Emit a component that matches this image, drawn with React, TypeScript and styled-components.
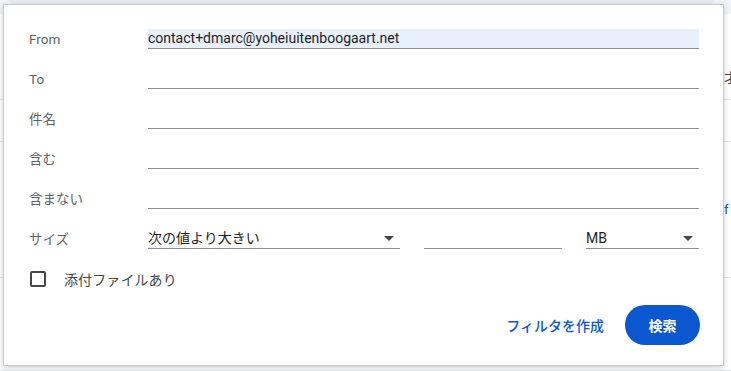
import React from "react";
import styled, { createGlobalStyle } from "styled-components";

const Global = createGlobalStyle`
  html, body { margin: 0; padding: 0; background: #ffffff; }
  body {
    font-family: Roboto, "Noto Sans CJK JP", "Noto Sans", sans-serif;
    -webkit-font-smoothing: antialiased;
  }
  * { box-sizing: border-box; }
`;

const Page = styled.div`
  position: relative;
  width: 731px;
  height: 371px;
  overflow: hidden;
  background: #ffffff;
`;

const TopStrip = styled.div`
  height: 14px;
  background: #f1f4f9;
  display: flex;
  padding: 0 16px 0 8px;
`;

const SearchBar = styled.div`
  flex: 1;
  height: 6px;
  margin-top: -2px;
  border-radius: 0 0 16px 16px;
  background: #e6ebf3;
`;

const ListRow = styled.div<{ $h: number; $color?: string; $top?: number }>`
  height: ${(p) => p.$h}px;
  border-bottom: 1px solid #e3e5e8;
  display: flex;
  align-items: ${(p) => (p.$top ? "flex-start" : "center")};
  padding-top: ${(p) => p.$top || 0}px;
  padding-left: 724px;
  font-size: 13px;
  line-height: 16px;
  color: ${(p) => p.$color || "#444746"};
  white-space: nowrap;
`;

const Dialog = styled.div`
  position: absolute;
  left: 3px;
  top: 4px;
  width: 721px;
  height: 362px;
  background: #ffffff;
  border: 1px solid #c9c9c9;
  box-shadow: 0 2px 6px rgba(60, 64, 67, 0.25);
  padding: 14px 23px 19px 25px;
  display: flex;
  flex-direction: column;
`;

const Form = styled.div`
  display: grid;
  grid-template-columns: 119px 551px;
  grid-auto-rows: 40px;
  align-items: center;
`;

const Label = styled.div`
  font-size: 13.5px;
  color: #5f6368;
  line-height: 20px;
`;

const TextField = styled.div<{ $filled?: boolean }>`
  height: 20px;
  border-bottom: 1px solid #8e918f;
  background: ${(p) => (p.$filled ? "#e8f0fe" : "transparent")};
  font-size: 14px;
  color: #1f1f1f;
  line-height: 19px;
  white-space: nowrap;
`;

const SizeRow = styled.div`
  display: flex;
  gap: 24px;
  align-items: center;
`;

const Select = styled.div<{ $w: number }>`
  width: ${(p) => p.$w}px;
  height: 20px;
  border-bottom: 1px solid #8e918f;
  display: flex;
  align-items: center;
  justify-content: space-between;
  font-size: 14px;
  color: #1f1f1f;
  line-height: 19px;
  padding-right: 6px;
`;

const NumberField = styled.div<{ $w: number }>`
  width: ${(p) => p.$w}px;
  height: 20px;
  border-bottom: 1px solid #8e918f;
`;

const Caret = styled.span`
  width: 0;
  height: 0;
  border-left: 5px solid transparent;
  border-right: 5px solid transparent;
  border-top: 5px solid #444746;
`;

const CheckRow = styled.div`
  grid-column: 1 / span 2;
  display: flex;
  align-items: center;
  gap: 18px;
  padding-left: 1px;
`;

const CheckBox = styled.span`
  width: 16px;
  height: 16px;
  border: 2px solid #444746;
  border-radius: 2px;
  display: inline-block;
`;

const CheckLabel = styled.span`
  font-size: 14px;
  color: #444746;
  letter-spacing: 0.1px;
`;

const Footer = styled.div`
  margin-top: 6px;
  display: flex;
  justify-content: flex-end;
  align-items: center;
  gap: 21px;
`;

const LinkButton = styled.button`
  border: 0;
  background: none;
  padding: 0;
  font-family: inherit;
  font-size: 14px;
  font-weight: 500;
  color: #0b57d0;
  cursor: pointer;
`;

const PrimaryButton = styled.button`
  width: 75px;
  height: 40px;
  border: 0;
  border-radius: 20px;
  background: #0b57d0;
  color: #ffffff;
  font-family: inherit;
  font-size: 14px;
  font-weight: 700;
  cursor: pointer;
`;

const rows: { label: string; value?: string }[] = [
  { label: "From", value: "contact+dmarc@yoheiuitenboogaart.net" },
  { label: "To" },
  { label: "件名" },
  { label: "含む" },
  { label: "含まない" },
];

export default function App() {
  return (
    <>
      <Global />
      <Page>
        <TopStrip>
          <SearchBar />
        </TopStrip>
        <ListRow $h={86} $top={56}>才</ListRow>
        <ListRow $h={42} />
        <ListRow $h={136} $color="#0b57d0">f</ListRow>
        <ListRow $h={93} />
        <Dialog>
          <Form>
            {rows.map((r) => (
              <React.Fragment key={r.label}>
                <Label>{r.label}</Label>
                <TextField $filled={!!r.value}>{r.value}</TextField>
              </React.Fragment>
            ))}
            <Label>サイズ</Label>
            <SizeRow>
              <Select $w={252}>
                <span>次の値より大きい</span>
                <Caret />
              </Select>
              <NumberField $w={138} />
              <Select $w={113}>
                <span>MB</span>
                <Caret />
              </Select>
            </SizeRow>
            <CheckRow>
              <CheckBox />
              <CheckLabel>添付ファイルあり</CheckLabel>
            </CheckRow>
          </Form>
          <Footer>
            <LinkButton>フィルタを作成</LinkButton>
            <PrimaryButton>検索</PrimaryButton>
          </Footer>
        </Dialog>
      </Page>
    </>
  );
}
